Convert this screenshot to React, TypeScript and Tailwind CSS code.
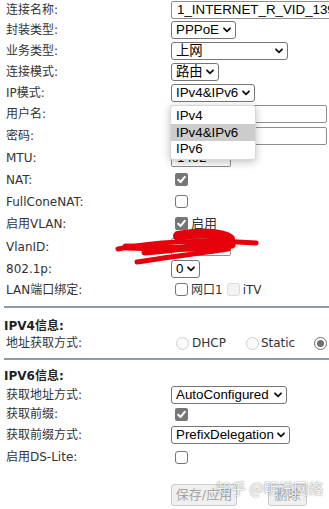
import type { ReactNode } from 'react'

const LABEL_FONT = 'font-["DejaVu_Sans","Noto_Sans_CJK_SC",sans-serif]'
const CTRL_FONT = 'font-["Liberation_Sans","Noto_Sans_CJK_SC",sans-serif]'

function Chevron() {
  return (
    <svg width="8" height="6" viewBox="0 0 8 6" className="shrink-0">
      <path d="M1 1.3 L4 4.3 L7 1.3" fill="none" stroke="#111" strokeWidth="1.8" strokeLinecap="round" strokeLinejoin="round" />
    </svg>
  )
}

function Select({ value, w }: { value: string; w: string }) {
  return (
    <div className={`${w} h-[18px] flex items-center justify-between border border-[#767676] rounded-[3px] bg-white pl-[4px] pr-[4px] text-[13.33px] text-black ${CTRL_FONT}`}>
      <span className="leading-none whitespace-nowrap">{value}</span>
      <Chevron />
    </div>
  )
}

function TextBox({ value = '', w }: { value?: string; w: string }) {
  return (
    <div className={`${w} h-[18px] shrink-0 flex items-center border border-[#8f8f8f] rounded-[2px] bg-white pl-[5px] text-[13.33px] text-black whitespace-nowrap overflow-hidden ${CTRL_FONT}`}>
      {value}
    </div>
  )
}

function Check({ checked, disabled }: { checked?: boolean; disabled?: boolean }) {
  if (checked) {
    return (
      <span className="ml-[4px] w-[13px] h-[13px] rounded-[2px] bg-[#767676] flex items-center justify-center shrink-0">
        <svg width="11" height="11" viewBox="0 0 10 10">
          <path d="M2 5.3 L4.1 7.3 L8 2.6" fill="none" stroke="#fff" strokeWidth="1.9" strokeLinecap="round" strokeLinejoin="round" />
        </svg>
      </span>
    )
  }
  return (
    <span className={`ml-[4px] w-[13px] h-[13px] rounded-[3px] border shrink-0 ${disabled ? 'border-[#dcdcdc] bg-[#f3f3f3]' : 'border-[#767676] bg-white'}`} />
  )
}

function Radio({ checked, className = '' }: { checked?: boolean; className?: string }) {
  if (checked) {
    return (
      <span className={`w-[13px] h-[13px] rounded-full border border-[#6f6f6f] bg-white flex items-center justify-center shrink-0 ${className}`}>
        <span className="w-[7px] h-[7px] rounded-full bg-[#6f6f6f]" />
      </span>
    )
  }
  return <span className={`block w-[13px] h-[13px] rounded-full border border-[#cfcfcf] bg-[#fafafa] shrink-0 ${className}`} />
}

function Row({ label, h, children }: { label: string; h: string; children?: ReactNode }) {
  return (
    <div className={`${h} flex items-center`}>
      <div className={`w-[171px] shrink-0 pl-[6px] text-[12px] text-[#333] ${LABEL_FONT}`}>{label}</div>
      <div className="flex items-center min-w-0">{children}</div>
    </div>
  )
}

function Divider() {
  return <div className="ml-[4px] h-[2px] bg-[#8d9aa6]" />
}

function SectionTitle({ text, h }: { text: string; h: string }) {
  return (
    <div className={`${h} flex items-center pl-[4px] text-[12px] font-bold text-[#222] ${LABEL_FONT}`}>{text}</div>
  )
}

export default function App() {
  return (
    <div className="relative w-[329px] h-[509px] overflow-hidden bg-white">
      {/* 基本设置 */}
      <Row label="连接名称:" h="h-[19px]">
        <TextBox value="1_INTERNET_R_VID_139" w="w-[200px]" />
      </Row>
      <Row label="封装类型:" h="h-[21px]"><Select value="PPPoE" w="w-[65px]" /></Row>
      <Row label="业务类型:" h="h-[21px]"><Select value="上网" w="w-[117px]" /></Row>
      <Row label="连接模式:" h="h-[21px]"><Select value="路由" w="w-[48px]" /></Row>
      <Row label="IP模式:" h="h-[21px]"><Select value="IPv4&IPv6" w="w-[84px]" /></Row>
      <Row label="用户名:" h="h-[22px]"><TextBox w="w-[156px]" /></Row>
      <Row label="密码:" h="h-[22px]"><TextBox w="w-[156px]" /></Row>
      <Row label="MTU:" h="h-[21px]"><TextBox value="1492" w="w-[60px]" /></Row>
      <Row label="NAT:" h="h-[23px]"><Check checked /></Row>
      <Row label="FullConeNAT:" h="h-[21px]"><Check /></Row>
      <Row label="启用VLAN:" h="h-[23px]">
        <Check checked />
        <span className={`ml-[3px] text-[13px] text-[#333] ${LABEL_FONT}`}>启用</span>
      </Row>
      <Row label="VlanID:" h="h-[23px]"><TextBox w="w-[60px]" /></Row>
      <Row label="802.1p:" h="h-[21px]"><Select value="0" w="w-[29px]" /></Row>
      <Row label="LAN端口绑定:" h="h-[21px]">
        <Check />
        <span className={`ml-[3px] text-[12px] text-[#333] ${LABEL_FONT}`}>网口1</span>
        <Check disabled />
        <span className={`ml-[3px] text-[12px] text-[#333] ${LABEL_FONT}`}>iTV</span>
      </Row>

      {/* IPV4 */}
      <div className="mt-[6px]"><Divider /></div>
      <SectionTitle text="IPV4信息:" h="h-[33px] pt-[2px]" />
      <div className="h-[20px] -mt-[8px] flex items-center">
        <div className={`w-[176px] shrink-0 pl-[6px] text-[12px] text-[#333] ${LABEL_FONT}`}>地址获取方式:</div>
        <div className={`flex items-center whitespace-nowrap text-[12px] text-[#333] ${LABEL_FONT}`}>
          <Radio />
          <span className="ml-[3px]">DHCP</span>
          <Radio className="ml-[20px]" />
          <span className="ml-[2px]">Static</span>
          <Radio checked className="ml-[19px]" />
          <span className="ml-[3px]">PPPoE</span>
        </div>
      </div>

      {/* IPV6 */}
      <div className="mt-[5px]"><Divider /></div>
      <SectionTitle text="IPV6信息:" h="h-[18px] mt-[7px]" />
      <Row label="获取地址方式:" h="h-[19px]"><Select value="AutoConfigured" w="w-[116px]" /></Row>
      <Row label="获取前缀:" h="h-[20px]"><Check checked /></Row>
      <Row label="获取前缀方式:" h="h-[22px]"><Select value="PrefixDelegation" w="w-[119px]" /></Row>
      <Row label="启用DS-Lite:" h="h-[22px]"><Check /></Row>

      <div className="mt-[16px] pl-[171px] flex items-center gap-[31px]">
        <div className={`w-[66px] h-[22px] flex items-center justify-center border border-[#cbcbcb] rounded-[3px] bg-[#f0f0f0] text-[13px] text-[#a6a6a6] ${LABEL_FONT}`}>保存/应用</div>
        <div className={`w-[39px] h-[22px] flex items-center justify-center border border-[#cbcbcb] rounded-[3px] bg-[#f0f0f0] text-[13px] text-[#a6a6a6] ${LABEL_FONT}`}>删除</div>
      </div>

      {/* 下拉菜单 (打开状态) */}
      <div className={`absolute left-[170px] top-[105px] w-[86px] py-[2px] bg-white rounded-[3px] border border-[#d8d8d8] shadow-[0_2px_8px_rgba(0,0,0,0.25)] text-[13.33px] text-black ${CTRL_FONT}`}>
        <div className="h-[16px] flex items-center pl-[5px]">IPv4</div>
        <div className="h-[17px] flex items-center pl-[5px] bg-[#cccccc]">IPv4&IPv6</div>
        <div className="h-[16px] flex items-center pl-[5px]">IPv6</div>
      </div>

      {/* 涂抹 */}
      <svg className="absolute left-0 top-0 pointer-events-none" width="329" height="509">
        <g fill="none" stroke="#e5000b" strokeLinecap="round">
          <path d="M178 236 C 198 232, 222 233, 230 239" strokeWidth="10" />
          <path d="M118 249 C 150 242, 205 239, 256 243" strokeWidth="5" />
          <path d="M126 247 C 160 248, 205 250, 232 245" strokeWidth="7" />
          <path d="M145 252 C 172 250, 200 246, 230 242" strokeWidth="7" />
          <path d="M137 262 C 168 257, 200 253, 228 249" strokeWidth="5" />
        </g>
      </svg>

      {/* 水印 */}
      <div className="absolute left-[216px] top-[477px] text-[15px] whitespace-nowrap text-white/90 [text-shadow:0_0_1.5px_rgba(0,0,0,0.6)] font-['Noto_Sans_CJK_SC',sans-serif]">
        知乎 @明说网络
      </div>
    </div>
  )
}
